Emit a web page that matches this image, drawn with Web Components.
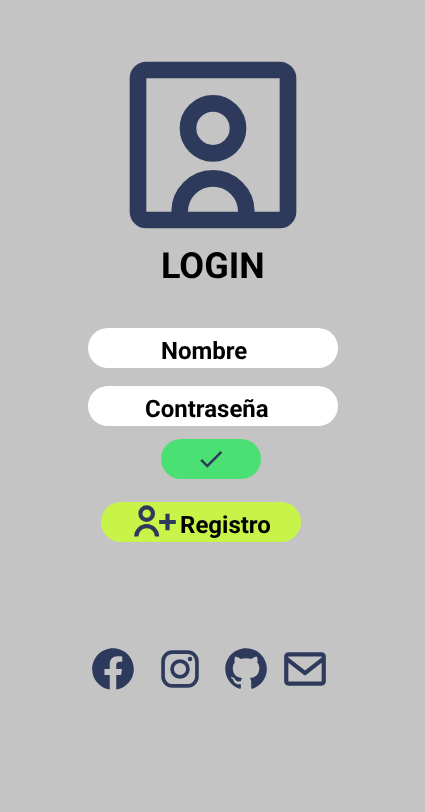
<!DOCTYPE html>
<html lang="es">
<head>
<meta charset="utf-8">
<title>Login</title>
<style>
html,body{margin:0;background:#c4c4c4}
</style>
</head>
<body>
<login-screen></login-screen>
<script>
const ICONS = {
  portrait: '<g fill="none" stroke="currentColor" stroke-width="2"><rect x="3" y="3" width="18" height="18" rx="1"/><circle cx="12" cy="10" r="3"/><path d="M8 20.2V20a4 4 0 0 1 8 0v.2"/></g>',
  check: '<path d="M9 16.17 4.83 12l-1.42 1.41L9 19 21 7l-1.41-1.41z"/>',
  userPlus: '<g fill="none" stroke="currentColor" stroke-width="2"><circle cx="8" cy="8" r="3"/><path d="M3 19a5 5 0 0 1 10 0M18 8v8M14 12h8"/></g>',
  facebook: '<path d="M12.001 2.002c-5.522 0-9.999 4.477-9.999 9.999 0 4.99 3.656 9.126 8.437 9.879v-6.988h-2.54v-2.891h2.54V9.798c0-2.508 1.493-3.891 3.776-3.891 1.094 0 2.24.195 2.24.195v2.459h-1.264c-1.24 0-1.628.772-1.628 1.563v1.875h2.771l-.443 2.891h-2.328v6.988C18.344 21.129 22 16.992 22 12.001c0-5.522-4.477-9.999-9.999-9.999z"/>',
  instagram: '<g fill="none" stroke="currentColor" stroke-width="1.75"><rect x="3.87" y="3.87" width="16.26" height="16.26" rx="4.5"/><circle cx="12" cy="12" r="3.8"/></g><circle cx="16.8" cy="7.2" r="1.08"/>',
  github: '<path d="M12.026 2c-5.509 0-9.974 4.465-9.974 9.974 0 4.406 2.857 8.145 6.821 9.465.499.09.679-.217.679-.481 0-.237-.008-.865-.011-1.696-2.775.602-3.361-1.338-3.361-1.338-.452-1.152-1.107-1.459-1.107-1.459-.905-.619.069-.605.069-.605 1.002.07 1.527 1.028 1.527 1.028.89 1.524 2.336 1.084 2.902.829.091-.645.351-1.085.635-1.334-2.214-.251-4.542-1.107-4.542-4.93 0-1.087.389-1.979 1.024-2.675-.101-.253-.446-1.268.099-2.64 0 0 .837-.269 2.742 1.021a9.582 9.582 0 0 1 2.496-.336 9.554 9.554 0 0 1 2.496.336c1.906-1.291 2.742-1.021 2.742-1.021.545 1.372.203 2.387.099 2.64.64.696 1.024 1.587 1.024 2.675 0 3.833-2.33 4.675-4.552 4.922.355.308.675.916.675 1.846 0 1.334-.012 2.41-.012 2.737 0 .267.178.577.687.479C19.146 20.115 22 16.379 22 11.974 22 6.465 17.535 2 12.026 2z"/>',
  mail: '<path d="M20 4H4c-1.103 0-2 .897-2 2v12c0 1.103.897 2 2 2h16c1.103 0 2-.897 2-2V6c0-1.103-.897-2-2-2zm0 2v.511l-8 6.223-8-6.222V6h16zM4 18V9.044l7.386 5.745a.994.994 0 0 0 1.228 0L20 9.044 20.002 18H4z"/>'
};

class AppIcon extends HTMLElement {
  constructor() {
    super();
    this.attachShadow({mode: 'open'});
  }
  connectedCallback() {
    this.shadowRoot.innerHTML = `<style>
      :host{display:block;flex:none;width:50px;height:50px;color:#2e3a5b}
      svg{display:block;width:100%;height:100%;fill:currentColor}
    </style><svg viewBox="0 0 24 24" aria-hidden="true">${ICONS[this.getAttribute('name')]}</svg>`;
  }
}

// Rounded bar used for the fields and the buttons.
class PillBox extends HTMLElement {
  constructor() {
    super();
    this.attachShadow({mode: 'open'}).innerHTML = `<style>
      :host{display:flex;box-sizing:border-box;height:40px;border-radius:20px;
        background:var(--pill,#fff);font-weight:700;font-size:24px;line-height:28px;white-space:nowrap}
      .label{padding-top:9px;will-change:transform}
    </style><slot name="icon"></slot><span class="label"><slot></slot></span>`;
  }
}

class SocialLinks extends HTMLElement {
  constructor() {
    super();
    this.attachShadow({mode: 'open'}).innerHTML = `<style>
      :host{display:grid;grid-template-columns:67px 66px 59px 50px}
    </style>
    <app-icon name="facebook"></app-icon><app-icon name="instagram"></app-icon>
    <app-icon name="github"></app-icon><app-icon name="mail"></app-icon>`;
  }
}

class LoginScreen extends HTMLElement {
  constructor() {
    super();
    this.attachShadow({mode: 'open'}).innerHTML = `<style>
      :host{display:flex;flex-direction:column;align-items:flex-start;box-sizing:border-box;
        width:425px;height:812px;padding-top:45px;overflow:hidden;
        background:#c4c4c4;color:#000;font-family:Roboto,sans-serif;text-rendering:geometricPrecision}
      .avatar{width:200px;height:200px;margin-left:113px}
      h1{margin:0 0 0 161px;font-size:36px;line-height:42px;font-weight:700;will-change:transform}
      .field{width:250px;margin-left:88px}
      .name{margin-top:41px;padding-left:73px}
      .pass{margin-top:18px;padding-left:57px}
      .ok{--pill:#4be073;width:100px;margin:13px 0 0 161px;padding:5px 0 0 35px}
      .ok app-icon{width:30px;height:30px}
      .reg{--pill:#c8f44a;width:200px;margin:23px 0 0 101px;padding-left:29px}
      .reg app-icon{margin-top:-5px}
      social-links{margin:102px 0 0 88px}
    </style>
    <app-icon class="avatar" name="portrait"></app-icon>
    <h1>LOGIN</h1>
    <pill-box class="field name">Nombre</pill-box>
    <pill-box class="field pass">Contraseña</pill-box>
    <pill-box class="ok"><app-icon slot="icon" name="check"></app-icon></pill-box>
    <pill-box class="reg"><app-icon slot="icon" name="userPlus"></app-icon>Registro</pill-box>
    <social-links></social-links>`;
  }
}
customElements.define('app-icon', AppIcon);
customElements.define('pill-box', PillBox);
customElements.define('social-links', SocialLinks);
customElements.define('login-screen', LoginScreen);
</script>
</body>
</html>
